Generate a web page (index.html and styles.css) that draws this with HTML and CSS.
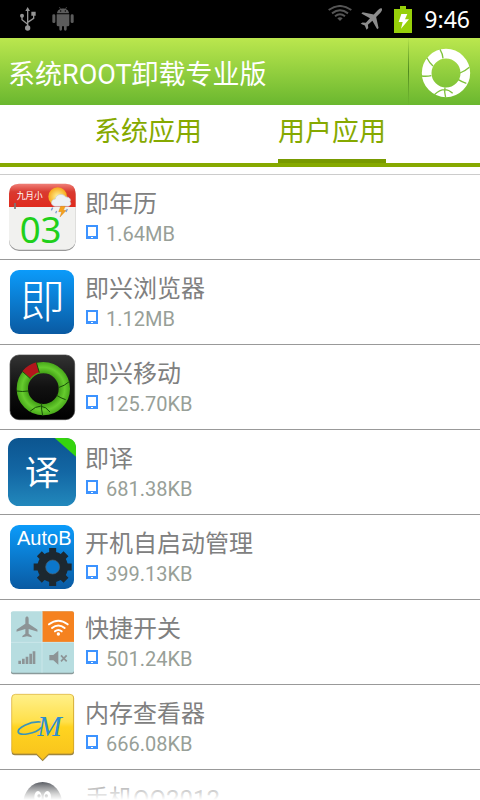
FILE: index.html
```html
<!DOCTYPE html>
<html lang="zh-CN">
<head>
    <meta charset="UTF-8">
    <meta name="viewport" content="width=device-width, initial-scale=1">
    <title>系统ROOT卸载专业版</title>
    <link rel="stylesheet" href="styles.css">
</head>
<body>
    <!-- shared shapes -->
    <svg class="defs" width="0" height="0" aria-hidden="true">
        <defs>
            <symbol id="phone" viewBox="0 0 12 14">
                <path fill="#3d93ff" fill-rule="evenodd" d="M0 0h12v14H0zM2 2v9h8V2z"/>
                <path fill="#fff" d="M5 12h2v1H5z"/>
            </symbol>
            <symbol id="plane" viewBox="0 0 64 64">
                <path d="M32 0c3 0 5 4 5 9v13l27 18v6l-27-8v14l9 7v4l-14-3-14 3v-4l9-7V38L0 46v-6l27-18V9c0-5 2-9 5-9z"/>
            </symbol>
            <linearGradient id="blue" x1="0" y1="0" x2="0" y2="1">
                <stop offset="0" stop-color="#0b9bfa"/>
                <stop offset="1" stop-color="#0a5aa2"/>
            </linearGradient>
            <linearGradient id="red" x1="0" y1="0" x2="0" y2="1">
                <stop offset="0" stop-color="#f08078"/>
                <stop offset=".35" stop-color="#d93a30"/>
                <stop offset="1" stop-color="#e02a1c"/>
            </linearGradient>
            <linearGradient id="black" x1="0" y1="0" x2="0" y2="1">
                <stop offset="0" stop-color="#333"/>
                <stop offset=".5" stop-color="#111"/>
                <stop offset="1" stop-color="#000"/>
            </linearGradient>
            <linearGradient id="navy" x1="0" y1="0" x2="0" y2="1">
                <stop offset="0" stop-color="#0c5590"/>
                <stop offset=".5" stop-color="#1367a4"/>
                <stop offset="1" stop-color="#2288bc"/>
            </linearGradient>
            <linearGradient id="yellow" x1="0" y1="0" x2="0" y2="1">
                <stop offset="0" stop-color="#fff08a"/>
                <stop offset=".42" stop-color="#ffe04a"/>
                <stop offset=".5" stop-color="#ffd420"/>
                <stop offset="1" stop-color="#f8c21c"/>
            </linearGradient>
            <linearGradient id="gray" x1="0" y1="0" x2="0" y2="1">
                <stop offset="0" stop-color="#222630"/>
                <stop offset=".3" stop-color="#555"/>
            </linearGradient>
            <radialGradient id="green" gradientUnits="userSpaceOnUse" cx="106" cy="107" r="80">
                <stop offset=".56" stop-color="#3f9c14"/>
                <stop offset=".8" stop-color="#66cc2e"/>
                <stop offset="1" stop-color="#48a81a"/>
            </radialGradient>
            <radialGradient id="sun">
                <stop offset="0" stop-color="#fff7a0"/>
                <stop offset="1" stop-color="#f7a81c"/>
            </radialGradient>
        </defs>
    </svg>

    <div class="status">
        <svg class="usb" width="16" height="24" viewBox="0 0 48 72" fill="none" stroke="#949494" stroke-width="4">
            <path d="M23 60V8M23 52L6 38V26M23 46l18-12V22"/>
            <path fill="#949494" stroke="none" d="M23 0l7 12H16zM34 14h13v12H34z"/>
            <circle cx="6" cy="26" r="6" fill="#949494" stroke="none"/>
            <circle cx="23" cy="63" r="8" fill="#949494" stroke="none"/>
        </svg>
        <svg class="robot" width="22" height="24" viewBox="0 0 66 72" fill="#5c5c5c">
            <path stroke="#5c5c5c" stroke-width="2" d="M22 0l5 8M44 0l-5 8"/>
            <path d="M15 19C16 0 50 0 51 19z"/>
            <path d="M14 22h38v32q0 4-5 4h-3v9q0 4-4 4t-4-4v-9h-6v9q0 4-4 4t-4-4v-9h-3q-5 0-5-4z"/>
            <rect x="1" y="22" width="9" height="26" rx="4"/>
            <rect x="56" y="22" width="9" height="26" rx="4"/>
            <circle cx="26" cy="12" r="2" fill="#000"/>
            <circle cx="40" cy="12" r="2" fill="#000"/>
        </svg>
        <div class="status-right">
            <svg class="wifi" width="24" height="16" viewBox="0 0 72 48" fill="none" stroke="#555" stroke-width="6">
                <path d="M2 15Q36-9 70 15M12 25q24-18 48 0M21 34q15-12 30 0"/>
                <path fill="#555" stroke="none" d="M28 40q8-6 16 0l-8 8z"/>
            </svg>
            <svg class="flight" width="22" height="22" viewBox="0 0 64 64" fill="#8c8c8c">
                <path d="M63 1c3 4-1 10-5 14L47 26l7 32-4 4-14-25-13 12 1 9-5 5-5-12L2 46l5-4 10 1 12-13L4 16l4-4 32 7L51 7c4-4 8-8 12-6z"/>
            </svg>
            <svg class="battery" width="18" height="27" viewBox="0 0 54 81">
                <path fill="#97d00a" d="M18 0h18v9h18v72H0V9h18z"/>
                <path fill="#fff" d="M22 24h18l-7 16h12L21 68l5-20H14z"/>
            </svg>
            <time>9:46</time>
        </div>
    </div>

    <header class="header">
        <h1>系统ROOT卸载专业版</h1>
        <button class="ring-btn" type="button" aria-label="即兴移动">
            <svg width="50" height="50" viewBox="0 0 150 150" fill="none">
                <circle cx="75" cy="75" r="58" stroke="#fff" stroke-width="29"/>
                <g stroke="#7fc23a" stroke-width="4">
                    <path d="M57 4q8 13 9 27M18 30q7 14 18 24M2 84q14 2 29-1M117 75q16-6 28-17M112 95q11 7 24 11M72 118q-3 14 2 31M40 140q30-28 55-4"/>
                </g>
            </svg>
        </button>
    </header>

    <nav class="tabs">
        <button class="tab" type="button">系统应用</button>
        <button class="tab active" type="button">用户应用</button>
    </nav>

    <ul class="list">
        <li class="row">
            <svg class="icon" viewBox="0 0 204 204">
                <rect x="3" y="5" width="200" height="199" rx="30" fill="#999"/>
                <rect x="3" y="2" width="200" height="198" rx="30" fill="#f1f1ef"/>
                <path fill="url(#red)" d="M3 72V32Q3 2 33 2h140q30 0 30 30v40z"/>
                <path stroke="#777" stroke-width="5" d="M21 60v18"/>
                <text class="lunar" x="26" y="48">九月小</text>
                <circle cx="149" cy="41" r="28" fill="url(#sun)"/>
                <path fill="#eef1f5" stroke="#c9ced8" stroke-width="2" d="M141 70c-14-2-14-20 1-22 2-16 25-18 31-6 12-1 17 9 13 14 6 8-1 15-10 14z"/>
                <path fill="#f6a21c" stroke="#c87410" stroke-width="1" d="M158 70h14l-6 12h9l-19 20 5-16h-9z"/>
                <path stroke="#7f9ed0" stroke-width="4" d="M134 74l-4 8M146 84l-3 7M178 78l-4 9"/>
                <text class="day" x="35" y="181">03</text>
            </svg>
            <div class="info">
                <h2>即年历</h2>
                <p><svg class="phone"><use href="#phone"/></svg>1.64MB</p>
            </div>
        </li>
        <li class="row">
            <svg class="icon" viewBox="0 0 204 204">
                <rect x="6" y="6" width="192" height="192" rx="27" fill="url(#blue)"/>
                <text class="brush" x="35" y="149">即</text>
            </svg>
            <div class="info">
                <h2>即兴浏览器</h2>
                <p><svg class="phone"><use href="#phone"/></svg>1.12MB</p>
            </div>
        </li>
        <li class="row">
            <svg class="icon" viewBox="0 0 204 204" fill="none">
                <rect x="6" y="6" width="194" height="194" rx="27" fill="url(#black)" stroke="#444" stroke-width="2"/>
                <circle cx="106" cy="107" r="63" stroke="url(#green)" stroke-width="34"/>
                <path fill="#b3161c" d="M43 55q16-20 42-27l9 30q-15 4-27 18z"/>
                <path stroke="#174d08" stroke-width="3" d="M85 28l9 31M43 55l24 22M26 114q17 3 34 0M151 104q18-5 34-19M146 127q12 8 27 13M101 151q-2 16 3 37M66 175q34-32 60 2"/>
            </svg>
            <div class="info">
                <h2>即兴移动</h2>
                <p><svg class="phone"><use href="#phone"/></svg>125.70KB</p>
            </div>
        </li>
        <li class="row">
            <svg class="icon" viewBox="0 0 204 204">
                <rect width="204" height="204" rx="32" fill="url(#navy)"/>
                <path fill="#35d40e" d="M140 0h32q32 0 32 32v24z"/>
                <text class="brush small" x="50" y="141">译</text>
            </svg>
            <div class="info">
                <h2>即译</h2>
                <p><svg class="phone"><use href="#phone"/></svg>681.38KB</p>
            </div>
        </li>
        <li class="row">
            <svg class="icon" viewBox="0 0 204 204">
                <rect x="6" y="6" width="192" height="192" rx="27" fill="url(#blue)"/>
                <text class="auto" x="27" y="66">AutoB</text>
                <g fill="#1c2830">
                    <circle cx="134" cy="132" r="46"/>
                    <g stroke="#1c2830" stroke-width="21">
                        <path d="M134 75v114M77 132h114M94 92l80 80M174 92l-80 80"/>
                    </g>
                </g>
                <circle cx="134" cy="132" r="21" fill="#0c77cb" stroke="#4a6070" stroke-width="2"/>
            </svg>
            <div class="info">
                <h2>开机自启动管理</h2>
                <p><svg class="phone"><use href="#phone"/></svg>399.13KB</p>
            </div>
        </li>
        <li class="row">
            <svg class="icon" viewBox="0 0 204 204">
                <rect x="9" y="12" width="189" height="187" rx="6" fill="#8a9a9a"/>
                <rect x="9" y="10" width="189" height="184" rx="6" fill="#b7dde0"/>
                <path fill="#f58220" d="M103 10h89q6 0 6 6v86h-95z"/>
                <path stroke="#d5ecee" stroke-width="2" d="M102 10v184M9 103h189"/>
                <use href="#plane" x="25" y="25" width="64" height="64" fill="#8d9496"/>
                <g fill="none" stroke="#fff" stroke-width="6" stroke-linecap="round">
                    <path d="M123 49q28-22 56 0M132 60q19-15 38 0M141 70q10-8 20 0"/>
                </g>
                <circle cx="151" cy="78" r="5" fill="#fff"/>
                <path fill="#8d9496" d="M31 158h8v10h-8zM42 152h8v16h-8zM53 146h8v22h-8zM64 137h8v31h-8zM74 130h8v38h-8zM124 141h12l15-13v42l-15-13h-12z"/>
                <path stroke="#8d9496" stroke-width="5" d="M159 142l17 18M176 142l-17 18"/>
            </svg>
            <div class="info">
                <h2>快捷开关</h2>
                <p><svg class="phone"><use href="#phone"/></svg>501.24KB</p>
            </div>
        </li>
        <li class="row">
            <svg class="icon" viewBox="0 0 204 204">
                <path fill="#9a8340" d="M20 7h168q10 0 10 10v160q0 10-10 10h-66l-18 18-18-18H21q-10 0-10-10z"/>
                <path fill="url(#yellow)" stroke="#d8a828" stroke-width="2" d="M22 4h164q11 0 11 11v156q0 11-11 11h-64l-18 18-18-18H22q-11 0-11-11V15Q11 4 22 4z"/>
                <text class="script" x="88" y="129">M</text>
                <path fill="none" stroke="#3a94b8" stroke-width="5" stroke-linecap="round" d="M96 87c-30-2-69 17-65 31 5 11 51 5 69-14"/>
            </svg>
            <div class="info">
                <h2>内存查看器</h2>
                <p><svg class="phone"><use href="#phone"/></svg>666.08KB</p>
            </div>
        </li>
        <li class="row">
            <svg class="icon" viewBox="0 0 204 204">
                <ellipse cx="104" cy="75" rx="58" ry="63" fill="url(#gray)"/>
                <ellipse cx="90" cy="57" rx="11" ry="18" fill="#fff"/>
                <ellipse cx="118" cy="57" rx="11" ry="18" fill="#fff"/>
                <circle cx="93" cy="54" r="5" fill="#222"/>
                <circle cx="115" cy="54" r="5" fill="#222"/>
            </svg>
            <div class="info">
                <h2>手机QQ2012</h2>
            </div>
        </li>
    </ul>
</body>
</html>
```
FILE: styles.css
```css
* {
    box-sizing: border-box;
}
body {
    margin: 0;
    height: 100vh;
    display: flex;
    flex-direction: column;
    overflow: hidden;
    background: #fff;
    font-family: Roboto, "Noto Sans CJK SC", sans-serif;
}
h1, h2, p, ul {
    margin: 0;
    padding: 0;
    font-weight: normal;
}
svg {
    display: block;
    flex: none;
}
button {
    border: 0;
    padding: 0;
    background: none;
    font: inherit;
    cursor: pointer;
}
.defs {
    position: absolute;
}

/* status bar */
.status {
    flex: none;
    display: flex;
    align-items: center;
    gap: 16px;
    height: 38px;
    padding: 0 10px 0 20px;
    background: #000;
}
.status-right {
    display: flex;
    align-items: center;
    gap: 12px;
    height: 38px;
    margin-left: auto;
}
.wifi {
    align-self: flex-start;
    margin-top: 5px;
    margin-right: -4px;
}
.status time {
    color: #fff;
    font-family: "Noto Sans", sans-serif;
    font-size: 23px;
    line-height: 38px;
}

/* title bar */
.header {
    flex: none;
    display: flex;
    align-items: center;
    justify-content: space-between;
    height: 67px;
    padding-left: 8px;
    background: linear-gradient(#bbe74e, #6ab72f);
}
.header h1 {
    padding-top: 6px;
    color: #fff;
    font-size: 27px;
    line-height: 40px;
}
.ring-btn {
    display: flex;
    align-items: center;
    justify-content: center;
    width: 72px;
    height: 100%;
    padding-top: 3px;
    padding-left: 2px;
    border-left: 1px solid #5c9a26;
    border-image: linear-gradient(transparent, #4f8a1e, transparent) 1;
}

/* tabs */
.tabs {
    flex: none;
    display: flex;
    justify-content: center;
    gap: 76px;
    height: 62px;
    border-bottom: 4px solid #86a900;
}
.tab {
    border-bottom: 4px solid transparent;
    color: #86a900;
    font-size: 27px;
    line-height: 50px;
}
.tab.active {
    border-color: #789a00;
}

/* app list */
.list {
    position: relative;
    flex: 1;
    min-height: 0;
    margin-top: 7px;
    border-top: 1px solid #ccc;
    overflow: hidden;
    list-style: none;
}
.list::after {
    content: "";
    position: absolute;
    left: 0;
    right: 0;
    bottom: 0;
    height: 24px;
    background: linear-gradient(rgba(255, 255, 255, 0), #fff);
}
.row {
    display: flex;
    gap: 9px;
    height: 85px;
    padding: 8px;
    border-bottom: 1px solid #999;
}
.icon {
    width: 68px;
    height: 68px;
    overflow: visible;
}
.info h2 {
    padding-top: 3px;
    color: #808080;
    font-size: 24px;
    line-height: 36px;
}
.info p {
    display: flex;
    align-items: center;
    gap: 8px;
    padding-left: 1px;
    color: #989f98;
    font-size: 20px;
    line-height: 24px;
}
.phone {
    width: 12px;
    height: 14px;
    margin-bottom: 4px;
}

/* lettering inside the app icons */
.lunar {
    fill: #fff;
    font-size: 26px;
}
.day {
    fill: #1fd01a;
    font-family: "Noto Sans", sans-serif;
    font-size: 110px;
}
.brush {
    fill: #fff;
    font-family: "Noto Sans CJK SC", sans-serif;
    font-size: 136px;
    font-weight: 300;
}
.brush.small {
    font-size: 104px;
    font-weight: 400;
}
.auto {
    fill: #fff;
    font-family: "Liberation Sans", sans-serif;
    font-size: 60px;
}
.script {
    fill: #2d8ed0;
    font-family: "Liberation Serif", serif;
    font-size: 88px;
    font-style: italic;
}
```
